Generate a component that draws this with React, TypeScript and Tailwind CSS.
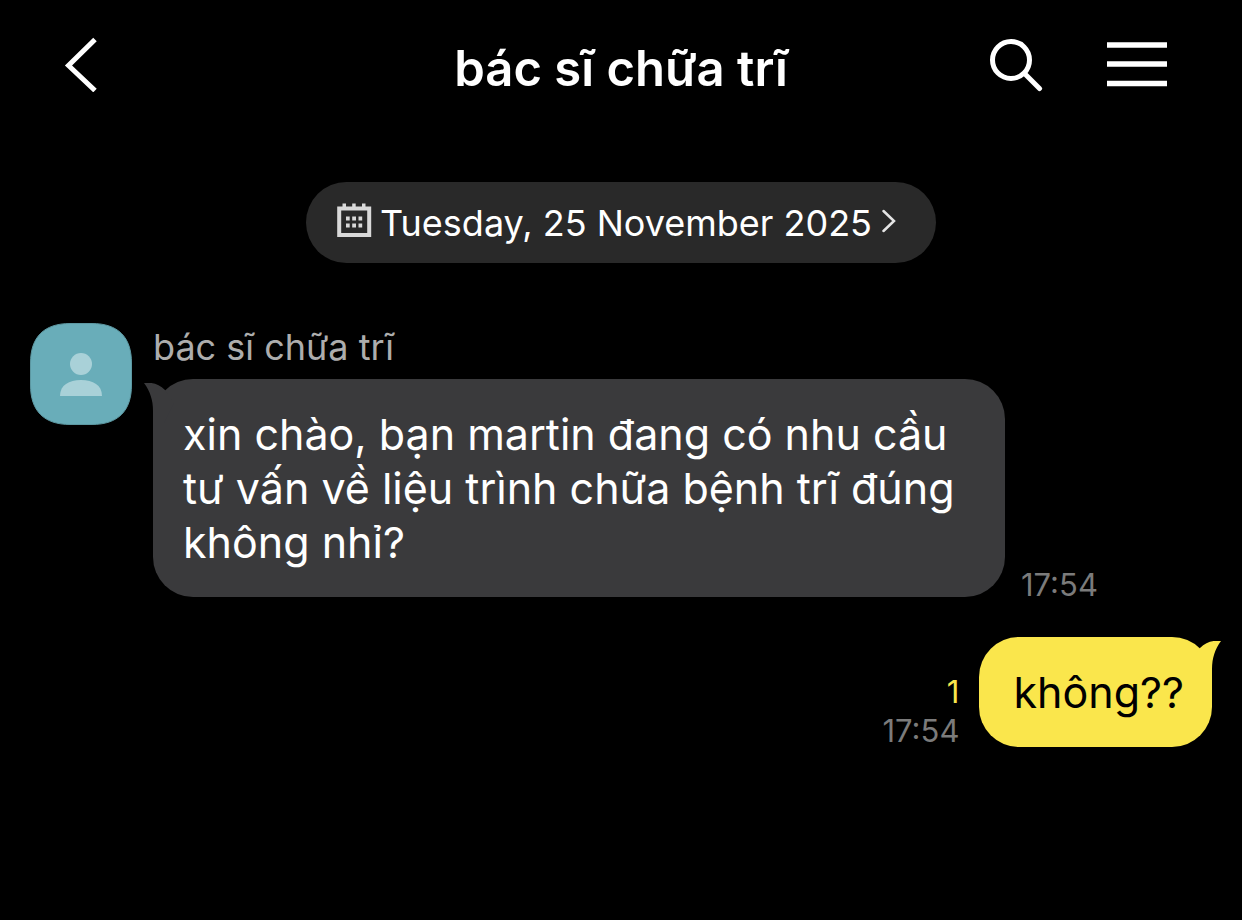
type Message = {
  id: number;
  text: string;
  time: string;
  mine: boolean;
  unread?: number;
};

const CONTACT = "bác sĩ chữa trĩ";

const messages: Message[] = [
  {
    id: 1,
    text: "xin chào, bạn martin đang có nhu cầu tư vấn về liệu trình chữa bệnh trĩ đúng không nhỉ?",
    time: "17:54",
    mine: false,
  },
  { id: 2, text: "không??", time: "17:54", mine: true, unread: 1 },
];

function Header() {
  return (
    <header className="grid grid-cols-[1fr_auto_1fr] items-start px-16 pt-8">
      <button type="button" aria-label="Back" className="justify-self-start">
        <svg viewBox="0 0 36 60" className="h-[60px] w-9" fill="none" aria-hidden="true">
          <path d="M31 7.5L4.5 33.5L31 58.5" stroke="#fff" strokeWidth="5" />
        </svg>
      </button>

      <h1 className="text-[49px] leading-[74px] font-semibold">{CONTACT}</h1>

      <div className="flex items-center gap-16 justify-self-end pt-1 pr-[11px]">
        <button type="button" aria-label="Search">
          <svg viewBox="0 0 56 56" className="size-14" fill="none" stroke="#fff" aria-hidden="true">
            <circle cx="24" cy="24" r="18.5" strokeWidth="5" />
            <path d="M37.5 37.5L52.5 52.5" strokeWidth="5" strokeLinecap="round" />
          </svg>
        </button>
        <button type="button" aria-label="Menu">
          <svg viewBox="0 0 60 56" className="h-14 w-[60px]" stroke="#fff" strokeWidth="5.5" aria-hidden="true">
            <path d="M0 9H60M0 28H60M0 47.5H60" />
          </svg>
        </button>
      </div>
    </header>
  );
}

function DateChip() {
  return (
    <button
      type="button"
      className="mx-auto mt-[76px] flex h-[81px] items-center rounded-full bg-[#292929] pr-10 pl-[30px]"
    >
      <svg viewBox="0 0 36 36" className="mb-1 size-9" aria-hidden="true">
        <rect x="3.2" y="5.5" width="30" height="26.5" fill="none" stroke="#d9d9d9" strokeWidth="4" />
        <g fill="#d9d9d9">
          <path d="M6.5 0.5H10V6H6.5zM16.2 0.5h3.5V6h-3.5zM26 0.5h3.5V6H26z" />
          <path d="M10 13.5h3.7v4H10zM16.2 13.5H20v4h-3.8zM22.5 13.5h3.7v4h-3.7z" />
          <path d="M10 20.5h3.7v4H10zM16.2 20.5H20v4h-3.8zM22.5 20.5h3.7v4h-3.7z" />
        </g>
      </svg>
      <span className="ml-2 text-4xl">Tuesday, 25 November 2025</span>
      <svg viewBox="0 0 14 24" className="mb-1 ml-2.5 h-6 w-3.5" fill="none" aria-hidden="true">
        <path d="M1.5 2L12 12L1.5 22" stroke="#e5e5e5" strokeWidth="2.5" strokeLinecap="round" />
      </svg>
    </button>
  );
}

function Avatar() {
  return (
    <svg viewBox="0 0 102 102" className="size-[102px] shrink-0" role="img" aria-label={CONTACT}>
      <path
        d="M40 .5H62C88 .5 101.5 14 101.5 40V62C101.5 88 88 101.5 62 101.5H40C14 101.5 .5 88 .5 62V40C.5 14 14 .5 40 .5Z"
        fill="#69adb9"
        stroke="#5d98a2"
      />
      <circle cx="51" cy="41" r="11" fill="#a9d1d8" />
      <path d="M30 73C30 62 39 57 51 57S72 62 72 73Z" fill="#a9d1d8" />
    </svg>
  );
}

function Tail({ mine }: { mine: boolean }) {
  return (
    <svg
      viewBox="0 0 30 40"
      className={
        mine
          ? "absolute top-1 -right-[9px] h-10 w-[30px] -scale-x-100 fill-[#fae64c]"
          : "absolute top-1 -left-[9px] h-10 w-[30px] fill-[#3a3a3c]"
      }
      aria-hidden="true"
    >
      <path d="M0 0C8 -1 15 1 21 7L30 20L20 40H9V28C9 17 6 8 0 0Z" />
    </svg>
  );
}

function Bubble({ message }: { message: Message }) {
  return (
    <div
      className={
        message.mine
          ? "relative rounded-[40px] bg-[#fae64c] py-7 pr-7 pl-[34px] text-black"
          : "relative max-w-[852px] rounded-[40px] bg-[#3a3a3c] px-[30px] py-7"
      }
    >
      <Tail mine={message.mine} />
      <p className="relative text-[43px] leading-[54px]">{message.text}</p>
    </div>
  );
}

function Received({ message }: { message: Message }) {
  return (
    <li className="flex items-start gap-[21px]">
      <Avatar />
      <div className="min-w-0">
        <p className="mb-2 text-4xl leading-[48px] text-[#adadad]">{CONTACT}</p>
        <div className="flex items-end gap-4">
          <Bubble message={message} />
          <time className="text-[31px] leading-6 text-[#7b7b7b]">{message.time}</time>
        </div>
      </div>
    </li>
  );
}

function Sent({ message }: { message: Message }) {
  return (
    <li className="flex items-end justify-end gap-5">
      <div className="flex flex-col items-end">
        <span className="text-[31px] leading-[46px] text-[#fae64c]">{message.unread}</span>
        <time className="text-[31px] leading-8 text-[#7b7b7b]">{message.time}</time>
      </div>
      <Bubble message={message} />
    </li>
  );
}

export default function App() {
  return (
    <main className="min-h-screen bg-black font-['Inter','Noto_Sans',sans-serif] text-white">
      <Header />
      <DateChip />
      <ul className="mt-[60px] flex flex-col gap-10 px-[30px]">
        {messages.map((m) =>
          m.mine ? <Sent key={m.id} message={m} /> : <Received key={m.id} message={m} />
        )}
      </ul>
    </main>
  );
}
